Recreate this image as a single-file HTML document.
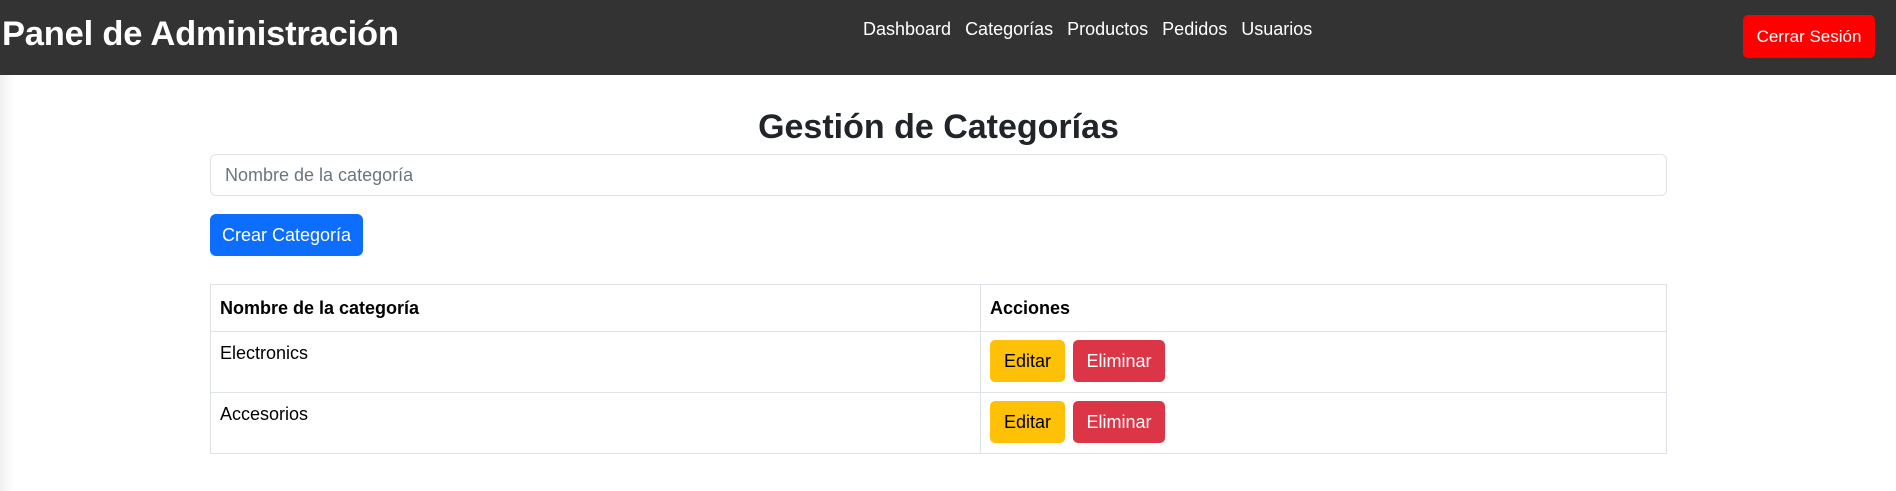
<!DOCTYPE html>
<html><head><meta charset="utf-8"><style>
*{box-sizing:border-box;margin:0;padding:0}
body{width:1896px;height:491px;background:#fff;font-family:"Liberation Sans",sans-serif;position:relative;overflow:hidden;color:#212529}
.shade{position:absolute;left:0;top:75px;width:14px;height:416px;background:linear-gradient(to right,#f0f0f0,#fff)}
nav{position:absolute;left:0;top:0;width:1896px;height:75px;background:#333}
.brand{position:absolute;left:2px;top:15px;color:#fff;font-size:34.5px;font-weight:bold;letter-spacing:-0.2px}
.links{position:absolute;left:863px;top:19px;color:#fff;font-size:18px;white-space:nowrap}
.links span{margin-right:14px}
.logout{position:absolute;left:1743px;top:15px;width:132px;height:43px;background:#f00;color:#fff;border-radius:5px;font-size:17px;text-align:center;line-height:43px}
h2{position:absolute;left:210px;width:1457px;top:108px;text-align:center;font-size:34px;font-weight:bold;color:#212529}
.input{position:absolute;left:210px;top:154px;width:1457px;height:42px;border:1px solid #dee2e6;border-radius:6px;padding-left:14px;line-height:40px;font-size:18px;color:#6c757d}
.create{position:absolute;left:210px;top:214px;width:153px;height:42px;background:#0d6efd;color:#fff;border-radius:6px;font-size:18px;text-align:center;line-height:42px}
table{position:absolute;left:210px;top:284px;width:1457px;border-collapse:collapse;font-size:18px;color:#000}
td,th{border:1px solid #dee2e6;text-align:left;vertical-align:top;padding:0 9px}
th{height:46px;line-height:46px;font-weight:bold}
td{height:61px;padding-top:11px}
.b{display:inline-block;height:42px;line-height:42px;border-radius:5px;font-size:18px;text-align:center;margin-top:-3px}
.e{background:#ffc107;color:#000;width:75px}
.d{background:#dc3545;color:#fff;width:92px;margin-left:8px}
</style></head><body>
<div class="shade"></div>
<nav><div class="brand">Panel de Administración</div>
<div class="links"><span>Dashboard</span><span>Categorías</span><span>Productos</span><span>Pedidos</span><span>Usuarios</span></div>
<div class="logout">Cerrar Sesión</div></nav>
<h2>Gestión de Categorías</h2>
<div class="input">Nombre de la categoría</div>
<div class="create">Crear Categoría</div>
<table>
<tr><th style="width:770px">Nombre de la categoría</th><th>Acciones</th></tr>
<tr><td>Electronics</td><td><span class="b e">Editar</span><span class="b d">Eliminar</span></td></tr>
<tr><td>Accesorios</td><td><span class="b e">Editar</span><span class="b d">Eliminar</span></td></tr>
</table>
</body></html>
